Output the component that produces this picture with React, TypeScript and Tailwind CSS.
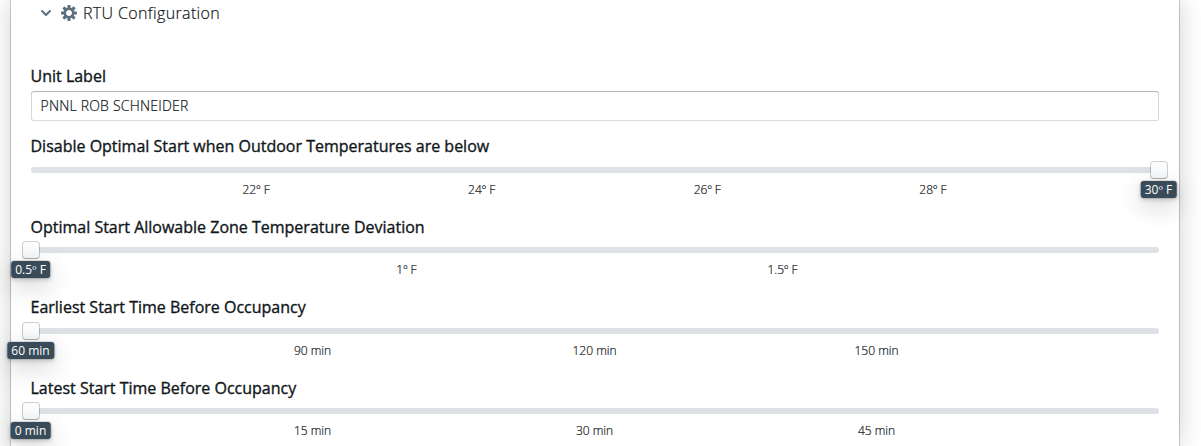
interface SliderProps {
  label: string;
  ticks: { text: string; at: number }[];
  value: { text: string; at: number };
  height: string;
  gap: string;
}

function Slider({ label, ticks, value, height, gap }: SliderProps) {
  return (
    <section className={height}>
      <h2 className="-ml-[0.5px] h-[24px] whitespace-nowrap text-[16px] leading-[24px] text-[#10161a] [-webkit-text-stroke:0.35px_#10161a]">
        {label}
      </h2>
      <div className={`relative h-[6px] rounded-[3px] bg-[#dee1e6] ${gap}`}>
        {ticks.map((t) => (
          <span
            key={t.text}
            className="absolute top-[14px] -ml-[0.5px] -translate-x-1/2 whitespace-nowrap px-[5px] py-[2px] text-[12px] font-light leading-[13px] text-[#10161a] [-webkit-text-stroke:0.2px_#10161a]"
            style={{ left: `${t.at}%` }}
          >
            {t.text}
          </span>
        ))}
        <span
          className="absolute -top-[5px] size-[16px] -translate-x-1/2 rounded-[3px] bg-[#f5f8fa] bg-linear-to-b from-white/80 to-white/0 shadow-[0_0_0_1px_rgba(16,22,26,0.2),0_1px_1px_rgba(16,22,26,0.2)]"
          style={{ left: `${value.at}%` }}
        />
        <span
          className="absolute top-[14px] -ml-[0.5px] -translate-x-1/2 whitespace-nowrap rounded-[3px] bg-[#394b59] px-[4.5px] py-[2px] text-[12px] leading-[13px] text-white shadow-[0_0_0_1px_rgba(16,22,26,0.1),0_2px_4px_rgba(16,22,26,0.2),0_8px_24px_rgba(16,22,26,0.2)]"
          style={{ left: `${value.at}%` }}
        >
          {value.text}
        </span>
      </div>
    </section>
  );
}

export default function App() {
  return (
    <div className="h-[446px] overflow-hidden bg-white px-[11px] font-['Open_Sans','Noto_Sans',sans-serif] text-[#10161a]">
      <main className="h-[446px] w-[1168px] bg-white px-[20px] shadow-[0_0_0_1px_rgba(16,22,26,0.2),0_0_24px_rgba(16,22,26,0.2)]">
        <header className="flex h-[26px] items-center pl-[7px] text-[#5c7080]">
          <svg viewBox="0 0 16 16" className="size-[16px]" fill="currentColor">
            <path d="M12 5c-.28 0-.53.11-.71.29L8 8.59l-3.29-3.3a1.003 1.003 0 00-1.42 1.42l4 4c.18.18.43.29.71.29s.53-.11.71-.29l4-4A1.003 1.003 0 0012 5z" />
          </svg>
          <svg viewBox="0 0 16 16" className="ml-[7px] size-[16px]" fill="currentColor">
            <path
              fillRule="evenodd"
              d="M15.19 6.39h-1.85c-.11-.37-.27-.71-.45-1.04l1.36-1.36c.31-.31.31-.82 0-1.13l-1.13-1.13a.803.803 0 00-1.13 0l-1.36 1.36c-.33-.17-.67-.33-1.04-.44V.79c0-.44-.36-.8-.8-.8h-1.6c-.44 0-.8.36-.8.8v1.86c-.39.12-.75.28-1.1.47l-1.3-1.3c-.3-.3-.79-.3-1.09 0L1.82 2.91c-.3.3-.3.79 0 1.09l1.3 1.3c-.2.34-.36.7-.48 1.09H.79c-.44 0-.8.36-.8.8v1.6c0 .44.36.8.8.8h1.85c.11.37.27.71.45 1.04l-1.36 1.36c-.31.31-.31.82 0 1.13l1.13 1.13c.31.31.82.31 1.13 0l1.36-1.36c.33.18.67.33 1.04.44v1.86c0 .44.36.8.8.8h1.6c.44 0 .8-.36.8-.8v-1.86c.39-.12.75-.28 1.1-.47l1.3 1.3c.3.3.79.3 1.09 0l1.09-1.09c.3-.3.3-.79 0-1.09l-1.3-1.3c.19-.35.36-.71.48-1.1h1.85c.44 0 .8-.36.8-.8v-1.6a.816.816 0 00-.81-.79zm-7.2 4.6c-1.66 0-3-1.34-3-3s1.34-3 3-3 3 1.34 3 3-1.34 3-3 3z"
            />
          </svg>
          <h1 className="ml-[6px] text-[16px] font-light leading-[24px] tracking-[0.36px] text-[#10161a] [-webkit-text-stroke:0.2px_#10161a]">
            RTU Configuration
          </h1>
        </header>
        <label className="mt-[38px] block">
          <span className="-ml-[0.5px] block h-[27px] text-[16px] leading-[24px] [-webkit-text-stroke:0.35px_#10161a]">Unit Label</span>
          <input
            className="block h-[30px] w-full rounded-[3px] bg-white pl-[9.5px] pr-[10px] pb-px text-[14px] font-light tracking-[0.2px] text-[#10161a] shadow-[inset_0_0_0_1px_rgba(16,22,26,0.15),inset_0_1px_1px_rgba(16,22,26,0.2)] outline-none [-webkit-text-stroke:0.2px_#10161a]"
            defaultValue="PNNL ROB SCHNEIDER"
          />
        </label>
        <div className="pt-[13px]">
          <Slider
            height="h-[81px]"
            gap="mt-[9px]"
            label="Disable Optimal Start when Outdoor Temperatures are below"
            ticks={[
              { text: "22º F", at: 20 },
              { text: "24º F", at: 40 },
              { text: "26º F", at: 60 },
              { text: "28º F", at: 80 },
            ]}
            value={{ text: "30º F", at: 100 }}
          />
          <Slider
            height="h-[80px]"
            gap="mt-[8px]"
            label="Optimal Start Allowable Zone Temperature Deviation"
            ticks={[
              { text: "1º F", at: 33.333 },
              { text: "1.5º F", at: 66.667 },
            ]}
            value={{ text: "0.5º F", at: 0 }}
          />
          <Slider
            height="h-[81px]"
            gap="mt-[9px]"
            label="Earliest Start Time Before Occupancy"
            ticks={[
              { text: "90 min", at: 25 },
              { text: "120 min", at: 50 },
              { text: "150 min", at: 75 },
            ]}
            value={{ text: "60 min", at: 0 }}
          />
          <Slider
            height="h-[80px]"
            gap="mt-[8px]"
            label="Latest Start Time Before Occupancy"
            ticks={[
              { text: "15 min", at: 25 },
              { text: "30 min", at: 50 },
              { text: "45 min", at: 75 },
            ]}
            value={{ text: "0 min", at: 0 }}
          />
        </div>
      </main>
    </div>
  );
}
